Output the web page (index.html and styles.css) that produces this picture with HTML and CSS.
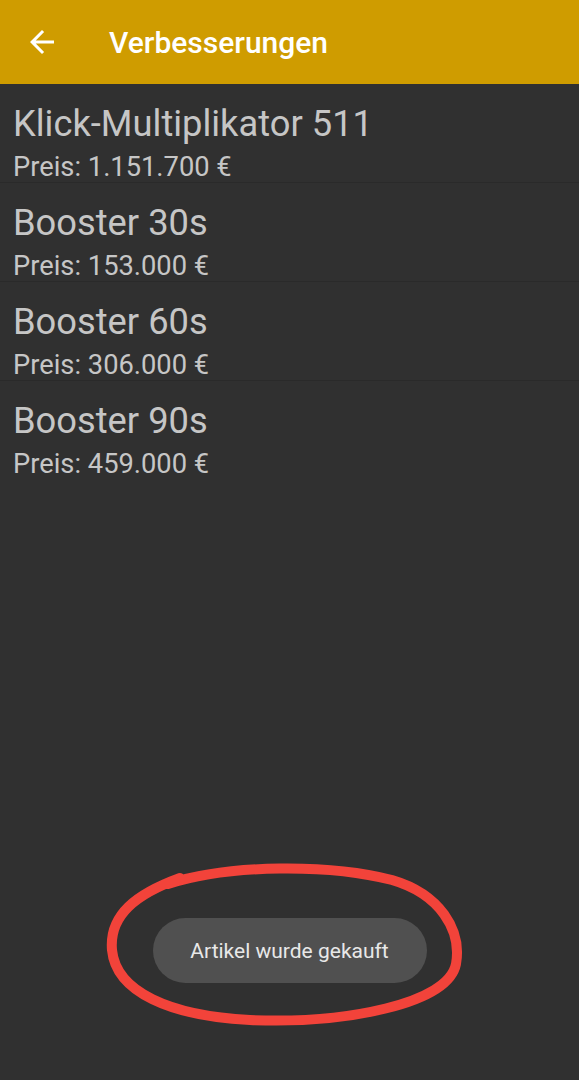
FILE: index.html
```html
<!DOCTYPE html>
<html lang="de">
<head>
  <meta charset="UTF-8">
  <title>Verbesserungen</title>
  <link rel="stylesheet" href="styles.css">
</head>
<body>
  <header class="toolbar">
    <svg class="back" viewBox="0 0 24 24" width="36" height="36">
      <path d="M20 11H7.83l5.59-5.59L12 4l-8 8 8 8 1.41-1.41L7.83 13H20v-2z" fill="#fff"/>
    </svg>
    <h1>Verbesserungen</h1>
  </header>

  <ul class="items">
    <li class="item">
      <div class="name">Klick-Multiplikator 511</div>
      <div class="price">Preis: 1.151.700 €</div>
    </li>
    <li class="item">
      <div class="name">Booster 30s</div>
      <div class="price">Preis: 153.000 €</div>
    </li>
    <li class="item">
      <div class="name">Booster 60s</div>
      <div class="price">Preis: 306.000 €</div>
    </li>
    <li class="item">
      <div class="name">Booster 90s</div>
      <div class="price">Preis: 459.000 €</div>
    </li>
  </ul>

  <div class="toast">Artikel wurde gekauft</div>

  <!-- red marker circle drawn over the toast -->
  <svg class="marker" width="579" height="1080" viewBox="0 0 579 1080">
    <path d="M168 884 C230 864 330 864 392 880 C440 894 462 930 456 964 C448 1004 345 1024 250 1020 C170 1016 116 992 112 950 C109 915 136 894 180 878"
          fill="none" stroke="#f2433a" stroke-width="10" stroke-linecap="round"/>
  </svg>
</body>
</html>
```

FILE: styles.css
```css
body {
  margin: 0;
  font-family: Roboto, "Noto Sans", sans-serif;
  background: #303030;
  min-height: 1080px;
  display: flex;
  flex-direction: column;
  position: relative;
}
.toolbar {
  height: 84px;
  background: #cf9c00;
  display: flex;
  align-items: center;
}
.back {
  margin-left: 24px;
}
.toolbar h1 {
  margin: 0 0 0 49px;
  font-size: 30px;
  font-weight: 500;
  color: #fff;
}
.items {
  list-style: none;
  margin: 0;
  padding: 0;
}
.item {
  height: 99px;
  padding: 17px 13px 0;
  box-sizing: border-box;
  border-bottom: 1px solid #2a2a2a;
  color: #c6c6c6;
}
.item:last-child {
  border-bottom: none;
}
.name {
  font-size: 36.3px;
  line-height: 46px;
}
.price {
  margin-top: 3px;
  font-size: 27.3px;
  line-height: 34px;
}
.toast {
  margin: auto auto 97px;
  width: 274px;
  height: 65px;
  border-radius: 33px;
  background: #505050;
  color: #e8e8e8;
  font-size: 21px;
  display: flex;
  align-items: center;
  justify-content: center;
}
.marker {
  position: absolute;
  left: 0;
  top: 0;
  pointer-events: none;
}
```
